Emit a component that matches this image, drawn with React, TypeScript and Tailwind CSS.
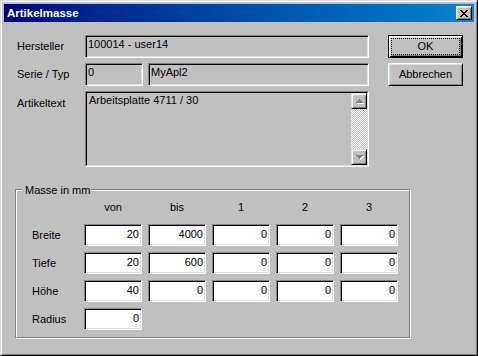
import React from 'react';

// classic 3D borders
const sunken =
  'border border-t-[#808080] border-l-[#808080] border-b-white border-r-white shadow-[inset_1px_1px_0_#000,inset_-1px_-1px_0_#dfdfdf]';
const raised =
  'border border-t-white border-l-white border-b-black border-r-black shadow-[inset_1px_1px_0_#dfdfdf,inset_-1px_-1px_0_#808080]';

const CloseGlyph = () => (
  <svg width="8" height="7" viewBox="0 0 8 7" shapeRendering="crispEdges">
    <g fill="#000">
      <rect x="0" y="0" width="2" height="1" />
      <rect x="6" y="0" width="2" height="1" />
      <rect x="1" y="1" width="2" height="1" />
      <rect x="5" y="1" width="2" height="1" />
      <rect x="2" y="2" width="4" height="1" />
      <rect x="3" y="3" width="2" height="1" />
      <rect x="2" y="4" width="4" height="1" />
      <rect x="1" y="5" width="2" height="1" />
      <rect x="5" y="5" width="2" height="1" />
      <rect x="0" y="6" width="2" height="1" />
      <rect x="6" y="6" width="2" height="1" />
    </g>
  </svg>
);

// disabled scroll arrow: gray triangle with white shadow
const Arrow = ({ down }: { down?: boolean }) => {
  const rows = down ? [7, 5, 3, 1] : [1, 3, 5, 7];
  const tri = (dx: number, dy: number, fill: string) =>
    rows.map((w, i) => (
      <rect key={`${fill}${i}`} x={3.5 - w / 2 + dx + 0.5} y={i + dy} width={w} height={1} fill={fill} />
    ));
  return (
    <svg width="9" height="5" viewBox="0 0 9 5" shapeRendering="crispEdges">
      {tri(1, 1, '#fff')}
      {tri(0, 0, '#808080')}
    </svg>
  );
};

const ScrollButton = ({ down }: { down?: boolean }) => (
  <div className="w-[16px] h-[16px] flex items-center justify-center bg-[#c0c0c0] border border-t-[#dfdfdf] border-l-[#dfdfdf] border-b-black border-r-black shadow-[inset_1px_1px_0_#fff,inset_-1px_-1px_0_#808080]">
    <Arrow down={down} />
  </div>
);

const NumField = ({ value }: { value: string }) => (
  <div className={`${sunken} w-[58px] h-full bg-white text-right pr-[2px] pt-[3px]`}>{value}</div>
);

const App = () => {
  const cols = ['von', 'bis', '1', '2', '3'];
  const rows = [
    { name: 'Breite', values: ['20', '4000', '0', '0', '0'] },
    { name: 'Tiefe', values: ['20', '600', '0', '0', '0'] },
    { name: 'Höhe', values: ['40', '0', '0', '0', '0'] },
    { name: 'Radius', values: ['0'] },
  ];

  return (
    <div className="w-[478px] h-[356px] bg-[#c0c0c0] font-['Liberation_Sans',Arial,sans-serif] text-[11px] leading-[13px] text-black">
      <div className="h-full border border-t-[#dfdfdf] border-l-[#dfdfdf] border-b-black border-r-black">
        <div className="h-full border border-t-white border-l-white border-b-[#808080] border-r-[#808080] p-[2px] flex flex-col">
          {/* Title bar */}
          <div className="h-[18px] shrink-0 flex items-center justify-between bg-linear-to-r from-[#000080] to-[#1084d0] pl-[3px] pr-[2px]">
            <span className="font-bold text-white text-[11.5px] leading-[18px]">Artikelmasse</span>
            <div className={`${raised} w-[16px] h-[14px] bg-[#c0c0c0] flex items-center justify-center`}>
              <CloseGlyph />
            </div>
          </div>

          {/* Top section */}
          <div className="flex pl-[13px] pt-[13px]">
            <div className="flex flex-col gap-[5px]">
              <div className="flex h-[23px] items-center">
                <span className="w-[68px]">Hersteller</span>
                <div className={`${sunken} w-[284px] h-full pl-[2px] pt-[2px]`}>100014 - user14</div>
              </div>
              <div className="flex h-[23px] items-center">
                <span className="w-[68px]">Serie / Typ</span>
                <div className="flex gap-[5px] h-full">
                  <div className={`${sunken} w-[58px] h-full pl-[2px] pt-[2px]`}>0</div>
                  <div className={`${sunken} w-[221px] h-full pl-[2px] pt-[2px]`}>MyApl2</div>
                </div>
              </div>
              <div className="flex h-[76px]">
                <span className="w-[68px] pt-[6px]">Artikeltext</span>
                <div className="w-[284px] h-full border border-t-[#808080] border-l-[#808080] border-b-white border-r-white">
                  <div className="h-full flex border border-t-black border-l-black border-b-[#dfdfdf] border-r-[#dfdfdf]">
                    <div className="flex-1 pl-[2px] pt-[1px]">Arbeitsplatte 4711 / 30</div>
                    <div className="w-[16px] flex flex-col">
                      <ScrollButton />
                      <div className="flex-1 bg-[repeating-conic-gradient(#c0c0c0_0%_25%,#fff_0%_50%)] bg-[length:2px_2px]" />
                      <ScrollButton down />
                    </div>
                  </div>
                </div>
              </div>
            </div>

            {/* Buttons */}
            <div className="ml-[19px] flex flex-col gap-[5px]">
              <button
                type="button"
                className="relative w-[75px] h-[23px] flex items-center justify-center bg-[#c0c0c0] border border-black shadow-[inset_1px_1px_0_#fff,inset_-1px_-1px_0_#000,inset_2px_2px_0_#dfdfdf,inset_-2px_-2px_0_#808080]"
              >
                <span className="absolute inset-[2px] border border-dotted border-black" />
                OK
              </button>
              <button
                type="button"
                className={`${raised} w-[75px] h-[23px] flex items-center justify-center bg-[#c0c0c0]`}
              >
                Abbrechen
              </button>
            </div>
          </div>

          {/* Masse in mm group */}
          <div className="relative ml-[11px] mt-[22px] w-[396px] h-[150px] border border-t-[#808080] border-l-[#808080] border-b-white border-r-white">
            <span className="absolute left-[6px] -top-[6px] pl-[3px] pr-[1px] bg-[#c0c0c0]">Masse in mm</span>
            <div className="h-full border border-t-white border-l-white border-b-[#808080] border-r-[#808080] pl-[15px] pt-[10px]">
              <div className="flex h-[13px] pl-[52px] gap-[6px]">
                {cols.map((c) => (
                  <span key={c} className="w-[58px] text-center">
                    {c}
                  </span>
                ))}
              </div>
              <div className="flex flex-col gap-[6px] mt-[10px]">
                {rows.map((r) => (
                  <div key={r.name} className="flex h-[22px] items-center">
                    <span className="w-[52px]">{r.name}</span>
                    <div className="flex gap-[6px] h-full">
                      {r.values.map((v, i) => (
                        <NumField key={i} value={v} />
                      ))}
                    </div>
                  </div>
                ))}
              </div>
            </div>
          </div>
        </div>
      </div>
    </div>
  );
};

export default App;
